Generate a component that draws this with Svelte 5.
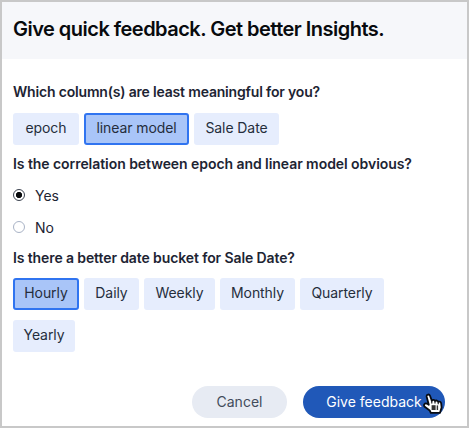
<script>
  let columns = $state([
    { label: 'epoch', width: 66, on: false },
    { label: 'linear model', width: 105, on: true },
    { label: 'Sale Date', width: 85, on: false }
  ]);
  let buckets = $state([
    { label: 'Hourly', width: 66, on: true },
    { label: 'Daily', width: 55, on: false },
    { label: 'Weekly', width: 71, on: false },
    { label: 'Monthly', width: 75, on: false },
    { label: 'Quarterly', width: 84, on: false },
    { label: 'Yearly', width: 62, on: false }
  ]);
  let answer = $state('Yes');
</script>

{#snippet chips(items)}
  <div class="chips">
    {#each items as item}
      <button class="chip" class:on={item.on} style:width="{item.width}px" onclick={() => (item.on = !item.on)}>{item.label}</button>
    {/each}
  </div>
{/snippet}

<div class="dialog">
  <header><h1>Give quick feedback. Get better Insights.</h1></header>
  <main>
    <h2 class="q1">Which column(s) are least meaningful for you?</h2>
    {@render chips(columns)}
    <h2 class="q2">Is the correlation between epoch and linear model obvious?</h2>
    <div class="options">
      {#each ['Yes', 'No'] as option}
        <label>
          <input type="radio" name="obvious" value={option} bind:group={answer} />
          <span>{option}</span>
        </label>
      {/each}
    </div>
    <h2 class="q3">Is there a better date bucket for Sale Date?</h2>
    {@render chips(buckets)}
  </main>
  <footer>
    <button class="cancel">Cancel</button>
    <button class="submit">
      Give feedback
      <svg class="hand" width="21" height="22" viewBox="0 0 21 22">
        <path d="M3.6 3.4C3.4 1.2 6.3 .8 7 2.8L8.8 7.6C9.8 6.5 11.5 6.9 12 8C13.1 7.1 14.8 7.5 15.2 8.8C16.6 8.1 18 9 18.2 10.6L18.6 14.4L17 19.8H7.8L6.7 17.4L1.7 13.8C0 12 1.8 9.6 3.8 10.6L5.8 11.8Z" fill="#fff" stroke="#080b12" stroke-width="1.8" stroke-linejoin="round" />
        <path d="M8.8 8V10.4M12 8.2V10.6M15.2 9V11.2" stroke="#080b12" stroke-width="1.1" />
        <path d="M8.6 12.2H12.6V17H8.6Z" fill="#333" />
        <path d="M14.4 12.4V17" stroke="#333" stroke-width="1.4" />
      </svg>
    </button>
  </footer>
</div>

<style>
  :global(body) { background: #fff; overflow: hidden; }
  .dialog {
    box-sizing: border-box;
    width: 469px;
    height: 428px;
    border: 2px solid #c8c8c8;
    background: #fff;
    color: #1d2433;
    font-family: Inter, "Liberation Sans", sans-serif;
    display: flex;
    flex-direction: column;
  }
  header { box-sizing: border-box; height: 57px; padding: 14px 11px 0; background: #f6f7fa; }
  h1, h2 { margin: 0; white-space: nowrap; }
  h1 { font-size: 20px; line-height: 26px; font-weight: 600; color: #080a0d; letter-spacing: -0.52px; }
  main { padding: 0 11px; flex: 1; }
  h2 { font-size: 14px; line-height: 20px; font-weight: 600; letter-spacing: -0.2px; }
  .q1 { margin: 23px 0 11px; letter-spacing: -0.18px; }
  .q2 { margin: 9px 0 11px; letter-spacing: -0.06px; }
  .q3 { margin: 11px 0 10px; letter-spacing: -0.11px; }
  .chips { display: flex; flex-wrap: wrap; gap: 10px 5px; max-width: 400px; }
  button { font: inherit; border: 0; padding: 0; white-space: nowrap; }
  .chip {
    box-sizing: border-box;
    height: 32px;
    padding-bottom: 3px;
    border-radius: 3px;
    background: #e6edfd;
    color: #252d3c;
    font-size: 14px;
    letter-spacing: -0.08px;
  }
  .chip.on { border: 2px solid #3074f0; background: #a9c5f8; }
  .options { display: flex; flex-direction: column; gap: 12px; }
  label { display: flex; align-items: center; height: 20px; gap: 10px; font-size: 14px; }
  input {
    appearance: none;
    box-sizing: border-box;
    width: 12px;
    height: 12px;
    margin: 0;
    border: 1px solid #a9b3c6;
    border-radius: 50%;
  }
  input:checked { border-color: #3c4350; background: radial-gradient(circle, #080a0d 2.8px, transparent 3.4px); }
  footer { display: flex; gap: 16px; justify-content: flex-end; padding: 0 22px 8px 0; }
  footer button { box-sizing: border-box; height: 32px; border-radius: 16px; font-size: 14px; padding-bottom: 2px; }
  .cancel { width: 95px; background: #e7ebf3; color: #424b5b; }
  .submit { position: relative; width: 142px; background: #2058b8; color: #fff; }
  .hand { position: absolute; left: 120px; top: 7px; }
</style>
